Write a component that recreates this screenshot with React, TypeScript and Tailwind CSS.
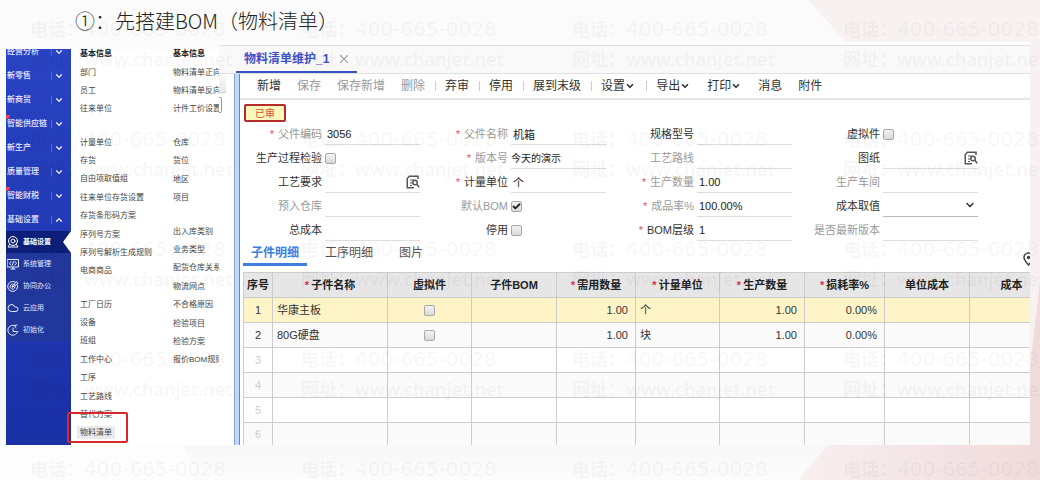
import type { ReactNode } from 'react';
import { clsx } from 'clsx';
import { CheckIcon, ChevronDownIcon, ChevronUpIcon, CloudIcon, XIcon } from 'lucide-react';

interface Field {
    id: string;
    label: string;
    type?: 'text' | 'checkbox' | 'select';
    value?: string;
    checked?: boolean;
    required?: boolean;
    muted?: boolean;
    lookup?: boolean;
    small?: boolean;
}

interface ToolbarItem {
    label: string;
    muted?: boolean;
    menu?: boolean;
    divider?: boolean;
}

interface Column {
    label: string;
    width: string;
    required?: boolean;
}

const modules = [
    { label: '经营分析' },
    { label: '新零售' },
    { label: '新商贸' },
    { label: '智能供应链', isNew: true },
    { label: '新生产' },
    { label: '质量管理' },
    { label: '智能财税', isNew: true },
    { label: '基础设置', open: true },
];

const menuLeft = [
    { height: 'h-[55px]', items: ['部门', '员工', '往来单位'] },
    {
        height: 'h-[147px]',
        items: ['计量单位', '存货', '自由项取值组', '往来单位存货设置', '存货条形码方案', '序列号方案', '序列号解析生成规则', '电商商品'],
    },
    {
        height: 'h-[147px]',
        items: ['工厂日历', '设备', '班组', '工作中心', '工序', '工艺路线', '替代方案', '物料清单'],
    },
];

const menuRight = [
    { height: 'h-[55px]', items: ['物料清单正向', '物料清单反向', '计件工价设置'] },
    { height: 'h-[74px]', items: ['仓库', '货位', '地区', '项目'] },
    {
        height: 'h-[147px]',
        items: ['出入库类别', '业务类型', '配货仓库关系', '物流网点', '不合格原因', '检验项目', '检验方案', '报价BOM规则'],
    },
];

const toolbar: ToolbarItem[] = [
    { label: '新增' },
    { label: '保存', muted: true },
    { label: '保存新增', muted: true },
    { label: '删除', muted: true, divider: true },
    { label: '弃审', divider: true },
    { label: '停用', divider: true },
    { label: '展到末级', divider: true },
    { label: '设置', menu: true, divider: true },
    { label: '导出', menu: true },
    { label: '打印', menu: true },
    { label: '消息' },
    { label: '附件' },
];

const fields: Field[] = [
    { id: 'code', label: '父件编码', value: '3056', required: true, muted: true },
    { id: 'name', label: '父件名称', value: '机箱', required: true, muted: true },
    { id: 'spec', label: '规格型号' },
    { id: 'virtual', label: '虚拟件', type: 'checkbox' },
    { id: 'inspect', label: '生产过程检验', type: 'checkbox' },
    { id: 'version', label: '版本号', value: '今天的演示', required: true, muted: true, small: true },
    { id: 'route', label: '工艺路线', muted: true },
    { id: 'drawing', label: '图纸', lookup: true },
    { id: 'craft', label: '工艺要求', lookup: true },
    { id: 'unit', label: '计量单位', value: '个', required: true },
    { id: 'quantity', label: '生产数量', value: '1.00', required: true, muted: true },
    { id: 'workshop', label: '生产车间', muted: true },
    { id: 'warehouse', label: '预入仓库', muted: true },
    { id: 'default-bom', label: '默认BOM', type: 'checkbox', checked: true, muted: true },
    { id: 'yield', label: '成品率%', value: '100.00%', required: true, muted: true },
    { id: 'cost-source', label: '成本取值', type: 'select' },
    { id: 'total-cost', label: '总成本' },
    { id: 'disabled', label: '停用', type: 'checkbox' },
    { id: 'level', label: 'BOM层级', value: '1', required: true },
    { id: 'latest', label: '是否最新版本', muted: true },
];

const columns: Column[] = [
    { label: '序号', width: 'w-[29px]' },
    { label: '子件名称', width: 'w-[115px]', required: true },
    { label: '虚拟件', width: 'w-[84px]' },
    { label: '子件BOM', width: 'w-[85px]' },
    { label: '需用数量', width: 'w-[79px]', required: true },
    { label: '计量单位', width: 'w-[84px]', required: true },
    { label: '生产数量', width: 'w-[85px]', required: true },
    { label: '损耗率%', width: 'w-[80px]', required: true },
    { label: '单位成本', width: 'w-[85px]' },
    { label: '成本', width: 'w-[84px]' },
];

const parts = [
    { name: '华康主板', need: '1.00', unit: '个', quantity: '1.00', loss: '0.00%' },
    { name: '80G硬盘', need: '1.00', unit: '块', quantity: '1.00', loss: '0.00%' },
];

const emptyRows = [3, 4, 5, 6];

function LineIcon({ children }: { children: ReactNode }) {
    return (
        <svg
            viewBox="0 0 24 24"
            className="size-3 shrink-0"
            fill="none"
            stroke="currentColor"
            strokeWidth="2"
            strokeLinecap="round"
            strokeLinejoin="round"
            aria-hidden="true"
        >
            {children}
        </svg>
    );
}

const subModules = [
    {
        label: '基础设置',
        icon: (
            <LineIcon>
                <circle cx="12" cy="10" r="9" />
                <circle cx="12" cy="10" r="4" />
                <path d="M5 17l-3 5h20l-3-5" />
            </LineIcon>
        ),
    },
    {
        label: '系统管理',
        icon: (
            <LineIcon>
                <path d="M1 3h22v15H1zM8 22h8M12 18v4M8 7l-3 3.500 3 3.500M16 7l3 3.500-3 3.500M13 7l-2 7" />
            </LineIcon>
        ),
    },
    {
        label: '协同办公',
        icon: (
            <LineIcon>
                <path d="M15 3.500A10 10 0 1 0 21 10" />
                <path d="M13 8.500A5 5 0 1 0 16 12" />
                <circle cx="11" cy="13" r="1.500" fill="currentColor" />
                <path d="M14 10l4-7 4 3-4 4z" />
            </LineIcon>
        ),
    },
    { label: '云应用', icon: <CloudIcon className="size-3 shrink-0" /> },
    {
        label: '初始化',
        icon: (
            <LineIcon>
                <path d="M15 3A10 10 0 1 0 21.500 15" />
                <path d="M12 8v7h7M15 3l5-1M15 3l3 5" />
            </LineIcon>
        ),
    },
];

function LookupIcon() {
    return (
        <svg
            viewBox="0 0 14 14"
            className="size-[14px]"
            fill="none"
            stroke="currentColor"
            strokeWidth="1.500"
            aria-hidden="true"
        >
            <path d="M12 4V1.250H3.500L1.250 3.500v9.250H8" />
            <path d="M4 5h4M4 8h2M4 10.500h2" strokeWidth="1" />
            <circle cx="9" cy="7.500" r="2.250" />
            <path d="M10.750 9.250l2.500 3" />
        </svg>
    );
}

function Checkbox({ id, label, checked }: { id?: string; label?: string; checked?: boolean }) {
    return (
        <span className="relative inline-flex size-[11px] align-middle">
            <input
                id={id}
                type="checkbox"
                aria-label={label}
                defaultChecked={checked}
                className="peer size-full appearance-none rounded-xs border border-[#a8a8a8] bg-linear-to-b from-[#f2f2f2] to-[#dadada]"
            />
            <CheckIcon
                strokeWidth={5}
                className="pointer-events-none absolute inset-0 hidden size-full p-px text-[#222] peer-checked:block"
            />
        </span>
    );
}

function Backdrop() {
    return (
        <svg
            viewBox="0 0 1040 480"
            preserveAspectRatio="none"
            className="absolute inset-0 size-full"
            aria-hidden="true"
        >
            <defs>
                <linearGradient id="page-shade" x1="0" y1="0" x2="0" y2="1">
                    <stop offset="0" stopColor="#fbfbfb" />
                    <stop offset="0.920" stopColor="#f7f7f7" />
                    <stop offset="1" stopColor="#fcfcfc" />
                </linearGradient>
                <linearGradient id="corner-shade" x1="0" y1="0" x2="1" y2="0">
                    <stop offset="0" stopColor="#f8eff0" />
                    <stop offset="1" stopColor="#f0dbdc" />
                </linearGradient>
            </defs>
            <path d="M0 0h1040v480H0z" fill="url(#page-shade)" />
            <path d="M0 440h182l16 40H0z" fill="#fdfdfd" />
            <path d="M808 0h232v480h-20L846 42z" fill="#f8f1f1" />
            <path d="M1040 280v200H798l34-40h190z" fill="url(#corner-shade)" />
        </svg>
    );
}

function Watermark() {
    return (
        <div
            className="pointer-events-none absolute inset-0 grid auto-rows-[60px] grid-cols-[repeat(4,271px)] gap-y-[50px] overflow-hidden pt-[14px] pl-[30px] font-['Noto_Sans','Noto_Sans_CJK_SC',sans-serif] text-lg leading-[30px] font-semibold whitespace-nowrap text-black/5"
            aria-hidden="true"
        >
            {Array.from({ length: 20 }, (_, index) => (
                <div key={index}>
                    <p className="flex leading-[30px]">
                        电话：
                        <span className="font-['DejaVu_Sans',sans-serif] text-xl leading-[30px] font-normal">
                            400-665-0028
                        </span>
                    </p>
                    <p>网址：www.chanjet.net</p>
                </div>
            ))}
        </div>
    );
}

function Sidebar() {
    return (
        <nav className="w-[65px] shrink-0 overflow-hidden bg-linear-to-b from-[#2943c3] to-[#192fa4] text-white">
            <ul className="-mt-[10px]">
                {modules.map(({ label, isNew, open }) => {
                    const Chevron = open ? ChevronUpIcon : ChevronDownIcon;

                    return (
                        <li key={label} className="relative">
                            {isNew && (
                                <span className="absolute top-1 left-0 size-1 rounded-br-full bg-[#e8405a]" />
                            )}
                            <button
                                type="button"
                                className="flex h-6 w-full items-center pt-px pl-px text-[8px] font-medium whitespace-nowrap text-[#e6eaff]"
                            >
                                {label}
                                <span className="ml-auto h-2 w-px bg-[#5468d0]" />
                                <Chevron className="mr-[7px] ml-[2px] size-[10px]" strokeWidth={3} />
                            </button>
                        </li>
                    );
                })}
            </ul>
            <ul className="bg-[#22379c]">
                {subModules.map(({ label, icon }, index) => (
                    <li key={label}>
                        <button
                            type="button"
                            className={clsx(
                                'flex h-[22px] w-full items-center gap-1 pl-px text-[7px] whitespace-nowrap',
                                index === 0 ? 'bg-[#0d1f78] font-bold text-white' : 'text-[#e6eaff]'
                            )}
                        >
                            {icon}
                            {label}
                            {index === 0 && (
                                <span className="ml-auto h-full w-2 bg-white [clip-path:polygon(100%_0,0_50%,100%_100%)]" />
                            )}
                        </button>
                    </li>
                ))}
            </ul>
        </nav>
    );
}

function MenuColumn({ groups }: { groups: typeof menuLeft }) {
    return (
        <div>
            <h2 className="mb-1 text-[8px] leading-[10px] font-bold text-[#222]">基本信息</h2>
            <div className="flex flex-col gap-[15px]">
                {groups.map((group) => (
                    <ul key={group.items[0]} className={clsx('flex flex-col', group.height)}>
                        {group.items.map((item) => (
                            <li key={item} className="relative flex flex-1 items-center">
                                <a
                                    href="#"
                                    className={clsx(
                                        'text-[8px] leading-[13px] whitespace-nowrap text-[#444]',
                                        item === '物料清单' && '-ml-[3px] bg-[#ebebeb] px-[3px]'
                                    )}
                                >
                                    {item}
                                </a>
                                {item === '物料清单' && (
                                    <span className="absolute -top-3 -left-[13px] h-[31px] w-[61px] rounded-xs border-2 border-[#d8282c]" />
                                )}
                            </li>
                        ))}
                    </ul>
                ))}
            </div>
        </div>
    );
}

function FormField({ field }: { field: Field }) {
    return (
        <div className="flex h-6 items-center pr-[6px]">
            <label
                htmlFor={field.id}
                className={clsx(
                    'mr-[3px] w-[82px] shrink-0 text-right whitespace-nowrap',
                    field.muted ? 'text-[#999]' : 'text-[#333]'
                )}
            >
                {field.required && <span className="mr-1 text-[#e05060]">*</span>}
                {field.label}
            </label>
            {field.type === 'checkbox' && <Checkbox id={field.id} checked={field.checked} />}
            {field.type === 'select' && (
                <span className="relative h-[22px] min-w-0 flex-1 border-b border-[#bbb]">
                    <select id={field.id} className="size-full appearance-none" />
                    <ChevronDownIcon
                        strokeWidth={3}
                        className="pointer-events-none absolute top-1 right-[2px] size-3 text-[#333]"
                    />
                </span>
            )}
            {(!field.type || field.type === 'text') && (
                <span className="flex h-[22px] min-w-0 flex-1 items-center border-b border-[#ddd]">
                    <input
                        id={field.id}
                        type="text"
                        defaultValue={field.value}
                        className={clsx(
                            'h-full w-full min-w-0 text-[#222]',
                            field.small ? 'text-[10px]' : 'pl-[2px]'
                        )}
                    />
                    {field.lookup && (
                        <button type="button" className="text-[#555]" aria-label={`选择${field.label}`}>
                            <LookupIcon />
                        </button>
                    )}
                </span>
            )}
        </div>
    );
}

function PartsTable() {
    const cell = 'border border-[#ccc] p-0';

    return (
        <table className="w-full min-w-[811px] table-fixed border-collapse">
            <colgroup>
                {columns.map((column) => (
                    <col key={column.label} className={column.width} />
                ))}
            </colgroup>
            <thead>
                <tr className="h-[25px] bg-[#e6e6e6] text-[#222]">
                    {columns.map((column) => (
                        <th key={column.label} scope="col" className={clsx(cell, 'whitespace-nowrap')}>
                            {column.required && <span className="mr-[2px] text-[#e03050]">*</span>}
                            {column.label}
                        </th>
                    ))}
                </tr>
            </thead>
            <tbody className="text-[#333]">
                {parts.map((part, index) => (
                    <tr key={part.name} className="h-[25px] odd:bg-[#fff3c8] even:bg-[#fafafa]">
                        <td className={clsx(cell, 'text-center')}>{index + 1}</td>
                        <td className={clsx(cell, 'pl-1')}>{part.name}</td>
                        <td className={clsx(cell, 'text-center leading-none')}>
                            <Checkbox label={`${part.name} 虚拟件`} />
                        </td>
                        <td className={cell} />
                        <td className={clsx(cell, 'pr-[7px] text-right')}>{part.need}</td>
                        <td className={clsx(cell, 'pl-1')}>{part.unit}</td>
                        <td className={clsx(cell, 'pr-[7px] text-right')}>{part.quantity}</td>
                        <td className={clsx(cell, 'pr-[7px] text-right')}>{part.loss}</td>
                        <td className={cell} />
                        <td className={cell} />
                    </tr>
                ))}
                {emptyRows.map((row) => (
                    <tr
                        key={row}
                        className="h-[25px] last:h-[22px] odd:bg-white even:bg-[#fafafa] last:*:border-b-0"
                    >
                        <td className={clsx(cell, 'text-center text-[#ccc]')}>{row}</td>
                        {columns.slice(1).map((column) => (
                            <td key={column.label} className={cell} />
                        ))}
                    </tr>
                ))}
            </tbody>
        </table>
    );
}

function Workspace() {
    return (
        <section className="flex min-w-0 flex-1 flex-col overflow-hidden border-t-3 border-white bg-white">
            <div className="flex h-[29px] items-stretch border-y border-[#e0e0e0] bg-[#f9f9f9] pl-[17px]">
                <div className="flex w-[121px] items-center gap-2 border-b-2 border-[#3b52c4] pl-2">
                    <button type="button" className="text-xs font-bold whitespace-nowrap text-[#3d50c8]">
                        物料清单维护_1
                    </button>
                    <button type="button" aria-label="关闭" className="text-[#aaa]">
                        <XIcon className="size-[14px]" strokeWidth={2} />
                    </button>
                </div>
            </div>
            <div className="flex flex-1">
                <div className="w-[15px] shrink-0">
                    <div className="h-[19px] w-[7px] border-b border-[#ccc] bg-linear-to-b from-[#fafafa] to-[#e8e8e8]" />
                    <div className="mt-1 h-4 w-[3px] rounded-r-xs border border-l-0 border-[#999]" />
                </div>
                <div className="w-[6px] shrink-0 border-r border-l border-r-[#5f86cc] border-l-[#7fa6dd] bg-[#bfd8fb]" />
                <div className="min-w-0 flex-1">
                    <div className="flex h-[26px] items-center border-b-2 border-[#e6e6e6] pl-[9px] text-xs">
                        {toolbar.map((item) => (
                            <div key={item.label} className="flex items-center">
                                <button
                                    type="button"
                                    className={clsx(
                                        'flex items-center pl-2 whitespace-nowrap',
                                        item.menu ? 'pr-[9px]' : 'pr-2',
                                        item.muted ? 'text-[#999]' : 'text-[#333]'
                                    )}
                                >
                                    {item.label}
                                    {item.menu && <ChevronDownIcon className="size-[10px]" strokeWidth={4} />}
                                </button>
                                {item.divider && <span className="mr-px ml-[2px] h-[10px] w-px bg-[#ccc]" />}
                            </div>
                        ))}
                    </div>
                    <div className="px-1 pt-1">
                        <span className="flex h-[18px] w-[42px] items-center justify-center rounded-xs border-2 border-[#b52a2a] bg-[#fdf6bd] text-[10px] text-[#d2502c]">
                            已审
                        </span>
                    </div>
                    <form className="grid grid-cols-4 pr-[46px] text-[11px]">
                        {fields.map((field) => (
                            <FormField key={field.id} field={field} />
                        ))}
                    </form>
                    <div className="flex items-stretch pl-[3px]">
                        <div className="flex h-6 gap-[10px] text-xs whitespace-nowrap text-[#555]">
                            <button
                                type="button"
                                className="border-b-3 border-[#3f7fe0] px-2 font-bold text-[#3a80e0]"
                            >
                                子件明细
                            </button>
                            <button type="button" className="border-b-3 border-transparent px-2">
                                工序明细
                            </button>
                            <button type="button" className="border-b-3 border-transparent px-2">
                                图片
                            </button>
                        </div>
                        <button type="button" aria-label="定位" className="-mr-1 ml-auto self-end text-[#444]">
                            <svg
                                viewBox="0 0 11 14"
                                className="h-[14px] w-[11px]"
                                fill="none"
                                stroke="currentColor"
                                strokeWidth="1.500"
                                aria-hidden="true"
                            >
                                <path d="M5.500 13C3.500 10.500 1 8 1 5.500a4.500 4.500 0 0 1 9 0C10 8 7.500 10.500 5.500 13z" />
                                <circle cx="5.500" cy="5.500" r="1" fill="currentColor" />
                            </svg>
                        </button>
                    </div>
                    <div className="mt-[6px] overflow-hidden pl-[3px] text-[11px]">
                        <PartsTable />
                    </div>
                </div>
            </div>
        </section>
    );
}

export default function App() {
    return (
        <div className="relative min-h-screen overflow-hidden font-['Liberation_Sans','Noto_Sans_CJK_SC',sans-serif]">
            <Backdrop />
            <main className="relative pr-[10px] pl-[6px]">
                <h1 className="pl-[69px] font-['Noto_Sans_CJK_SC',sans-serif] text-xl leading-[42px] font-light text-[#222]">
                    ①：先搭建BOM（物料清单）
                </h1>
                <div className="flex">
                    <div className="mt-[7px] flex w-[213px] shrink-0">
                        <Sidebar />
                        <div className="grid min-w-0 flex-1 grid-cols-[93px_46px] bg-white pl-[9px]">
                            <MenuColumn groups={menuLeft} />
                            <div className="overflow-x-clip">
                                <MenuColumn groups={menuRight} />
                            </div>
                        </div>
                    </div>
                    <Workspace />
                </div>
            </main>
            <Watermark />
        </div>
    );
}
